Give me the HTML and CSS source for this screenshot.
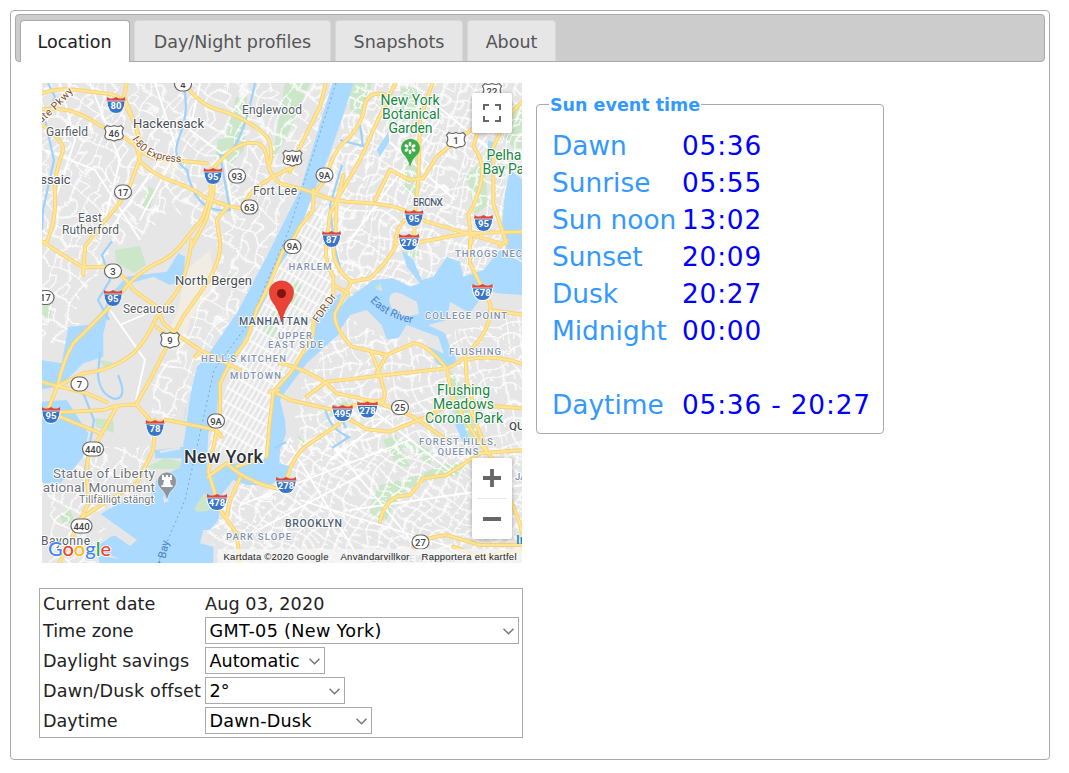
FILE: index.html
```html
<!DOCTYPE html>
<html lang="en">
<head>
<meta charset="utf-8">
<title>Location</title>
<link rel="stylesheet" href="styles.css">
</head>
<body>
<div class="tabs">
  <nav class="tab-bar">
    <a class="tab active"><span>Location</span></a>
    <a class="tab t2"><span>Day/Night profiles</span></a>
    <a class="tab t3"><span>Snapshots</span></a>
    <a class="tab t4"><span>About</span></a>
  </nav>
  <main class="panel">
    <section class="left">
      <svg class="map" viewBox="42 83 480 480" width="480" height="480">
        <defs>
          <filter id="bend" x="0" y="0" width="1" height="1"><feTurbulence baseFrequency=".022" numOctaves="2" seed="4"/><feDisplacementMap in="SourceGraphic" scale="20" xChannelSelector="R" yChannelSelector="G"/></filter>
          <pattern id="nj" width="19" height="25" patternUnits="userSpaceOnUse" patternTransform="rotate(30)"><path d="M0 1H19M1 0V25M0 14H10M10 14V25" class="st"/></pattern>
          <pattern id="mh" width="5" height="13" patternUnits="userSpaceOnUse" patternTransform="rotate(30)"><path d="M0 1H5M1 0V13" class="st"/></pattern>
          <pattern id="bx" width="13" height="17" patternUnits="userSpaceOnUse" patternTransform="rotate(18)"><path d="M0 1H13M1 0V17M7 0V9M0 9H7" class="st"/></pattern>
          <pattern id="qn" width="17" height="13" patternUnits="userSpaceOnUse" patternTransform="rotate(-14)"><path d="M0 1H17M1 0V13M9 0V7" class="st"/></pattern>
          <pattern id="bk" width="12" height="14" patternUnits="userSpaceOnUse" patternTransform="rotate(32)"><path d="M0 1H12M1 0V14M0 8H6" class="st"/></pattern>
          <g id="interstate">
            <path d="M-9.500 -6 Q-8.500 9 0 8.500 Q8.500 9 9.500 -6Z" fill="#3875c8" stroke="#fff" stroke-width="1"/>
            <path d="M-9 -8 Q-5 -5 0 -8 Q5 -5 9 -8 L9.500 -4H-9.500Z" fill="#d9483b"/>
            <path d="M-9.500 -4H9.500" stroke="#fff" stroke-width=".7"/>
          </g>
          <rect id="oval" x="-8.500" y="-7" width="17" height="14" rx="7" fill="#fff" stroke="#686868" stroke-width="1.200"/>
          <rect id="oval3" x="-10.500" y="-7" width="21" height="14" rx="7" fill="#fff" stroke="#686868" stroke-width="1.200"/>
          <path id="us" d="M-7 -7.500Q-4 -5.500 0 -7.500Q4 -5.500 7 -7.500L9.500 -5Q7 -1 9.300 3Q8.500 7 4 6.500L0 8L-4 6.500Q-8.500 7 -9.300 3Q-7 -1 -9.500 -5Z" fill="#fff" stroke="#686868" stroke-width="1.200"/>
          <g id="highways">
            <g transform="translate(40 80) scale(.33333)">
              <path d="M6 40C60 20 110 30 150 35S230 40 245 60S290 130 295 180S310 215 340 235L500 250"/>
              <path d="M262 0L252 50L285 130L300 180L298 240L265 330L230 380L180 440L135 500L130 580"/>
              <path d="M0 88C90 80 130 105 170 130S260 170 290 200L300 245Q350 290 400 305T500 355L565 378L600 385L640 330L690 295L760 260"/>
              <path d="M0 130Q70 180 70 210Q40 290 45 340Q50 420 20 486"/>
              <path d="M520 265C560 220 600 180 650 190S660 280 730 315"/>
              <path d="M523 260L520 340L498 420L455 500M512 265L512 340L488 415L435 480"/>
              <path d="M430 0Q460 60 520 85Q620 110 680 170Q700 200 690 250M565 378L530 420L540 486"/>
              <path d="M710 940L750 960L880 990M1020 970L1120 1010L1220 1080M900 1000L980 1048L1050 1055L1160 1010L1240 970L1450 985"/>
            </g>
            <g transform="translate(280 80) scale(.33333)">
              <path d="M0 310L60 325L160 360L200 365Q300 370 340 380T440 425L560 460L735 455M560 460L660 490M400 490L560 460"/>
              <path d="M100 330L100 390L60 440L35 486M140 0L120 80L60 200L30 275"/>
              <path d="M105 340L140 290Q160 210 200 180Q250 130 255 70Q270 30 320 45"/>
              <path d="M190 285Q180 350 150 400L140 486M165 486L170 360L240 240L280 150L350 0"/>
              <path d="M460 0L420 120L415 300L405 400L402 486M285 360L330 270L390 300L430 295L470 230L520 190L600 130L640 100"/>
              <path d="M600 130L580 200Q620 250 600 320T565 400L575 490M640 250L640 200L660 160L700 90L735 60M640 250L640 370L680 490M390 410Q350 430 345 490"/>
            </g>
            <g transform="translate(40 240) scale(.33333)">
              <path d="M0 0Q90 60 130 82L200 80Q240 90 280 150L350 200L370 250L420 290L480 330L600 390M130 82L130 105"/>
              <path d="M435 0Q400 50 350 70Q290 100 250 150L200 210L100 310Q70 360 55 430L20 520"/>
              <path d="M455 0Q440 120 400 170L350 230Q320 300 280 340Q220 390 130 400L50 440M540 0Q545 60 500 130L430 230L370 340L330 420L290 490"/>
              <path d="M0 425L60 440L140 460L200 486M730 30L690 130L650 210L620 300L570 370L540 430L540 540M350 262L375 280M690 455L715 450M465 350L480 335"/>
            </g>
            <g transform="translate(280 240) scale(.33333)">
              <path d="M140 0Q130 60 160 110L160 160M162 0Q150 80 215 125L270 115Q330 60 350 10L400 -5M160 135L205 160"/>
              <path d="M215 125L165 220Q160 260 215 320L320 345L400 310Q440 310 500 385L520 486M100 240L100 280Q70 340 30 400L-20 455L-30 540L-40 650"/>
              <path d="M275 340L295 390L315 460L310 486M320 345L290 400M80 470L140 425L500 385Q540 370 556 345Q640 270 630 190L600 130L570 70L570 0"/>
              <path d="M556 345L560 420L580 490M556 360Q650 340 735 375M0 370Q60 380 140 430L170 460L310 490M630 210L735 225M680 0L660 20"/>
            </g>
            <g transform="translate(40 400) scale(.33333)">
              <path d="M0 40L190 30Q240 10 290 15L340 70L380 60L530 90L545 110M345 60L340 150L290 250L160 330L100 370M230 20L180 110L150 150Q130 220 150 300L60 486"/>
              <path d="M60 50L180 100M530 95L505 215L540 330L590 400L600 490M505 230L560 190Q620 250 735 270M600 235L570 300L560 350M650 180L590 200"/>
            </g>
            <g transform="translate(280 400) scale(.33333)">
              <path d="M20 240Q40 160 90 130L180 70L200 20L310 0"/>
              <path d="M300 365Q310 310 350 290L390 285L430 235L500 225L600 160L735 150M520 0L600 130L640 180M560 0L620 150"/>
              <path d="M400 440Q440 410 500 405L600 435L735 435M520 440L600 470L735 450M690 300Q720 360 726 400"/>
            </g>
          </g>
        </defs>

        <rect x="42" y="83" width="480" height="480" fill="#e6e6e6"/>
        <g fill="#f1ede4"><circle cx="170" cy="165" r="9"/><path d="M186 270L210 250L215 290L190 320L183 350L160 350L178 310Z"/></g>
        <g fill="#cbe6c9" class="parks">
          <path d="M236 97L247 97L244 150L230 165L220 160ZM218 140L225 138L228 150L214 165ZM148 186L155 190L150 210L142 205ZM115 250L140 246L146 265L134 273L116 262Z"/>
          <path d="M285 83L310 83L285 140L272 160ZM400 88L417 86L418 118L404 120ZM405 150L418 148L416 200L405 190ZM466 175L485 160L488 205L475 215ZM350 83L372 83L362 115L350 110Z"/>
          <path d="M263 332L277 305L286 309L272 342ZM286 297L294 280L301 285L296 308ZM347 297L358 290L357 303L347 307ZM402 240L420 245L418 258L405 255ZM42 300L54 297L50 318L42 315Z"/>
          <path d="M380 485L420 475L440 465L470 462L460 475L420 482L400 495L385 522L370 515L372 498ZM383 440L396 435L410 467L396 465ZM400 440L422 442L418 450L400 447ZM420 445L434 452L430 467L418 455ZM333 405L350 400L345 420L330 415ZM298 435L305 442L300 447Z"/>
          <path d="M450 370L470 400L482 440L470 440L452 410ZM95 418L113 420L114 433L96 427ZM59 515L70 508L75 523L63 524ZM98 360L113 362L108 370ZM490 83L522 110V160L492 120Z"/>
        </g>
        <g filter="url(#bend)">
          <path d="M22 63H340L262 252L195 390L140 440L150 380L215 250L170 200L100 250L60 340H22Z" fill="url(#nj)"/>
          <path d="M42 440H140V583H42Z" fill="url(#nj)"/>
          <path d="M352 63H542V290L403 277L347 300L318 255L310 210Z" fill="url(#bx)"/>
          <path d="M325 310L427 343L542 290V455L300 445L290 410Z" fill="url(#qn)"/>
          <path d="M270 430L542 455V583H210L208 500Z" fill="url(#bk)"/>
        </g>
        <path d="M310 203L345 210L330 323L275 410L265 460L207 450L240 343Z" fill="url(#mh)"/>
        <g class="street">
          <path d="M60 83L75 140L55 200M90 83L120 160L100 240M155 83L177 150L140 220M200 83L190 130L224 155L232 205M45 150L95 170L140 240M160 160L110 230M235 105L275 150M110 310L145 360L136 400M120 325L155 310"/>
          <path d="M290 445L360 560M320 430L430 563M300 500L460 550M240 505L410 440M350 510L522 485M230 545L370 470M360 400L455 475M330 460L390 415M430 100L522 175M365 120L455 200M350 240L440 120"/>
        </g>

        <g transform="translate(40 80) scale(.33333)" fill="#aadaff">
          <path d="M880 0H943L925 60L870 220L820 340L790 420L745 520L690 600L680 650L640 730L600 800L550 880L535 940L530 1000L505 1060L500 1170L515 1182L570 1152L670 1142L690 1090L690 1020L700 940L770 850L820 790L828 720L880 650L905 640L885 700L900 760L850 805L800 850L740 930L720 960L735 1020L738 1060L720 1110L718 1150L755 1160L740 1190L690 1215L620 1215L580 1200L548 1240L535 1320L510 1350L490 1350L480 1390L520 1400L520 1460H180L170 1400L240 1350L170 1310L250 1260L330 1250L350 1200L420 1160L425 1135L345 1135L345 1110L430 1100L435 990L450 950L470 860L500 830L590 700L680 530L780 330Z"/>
          <path d="M885 700L920 660L1000 600L1060 595L1110 620L1140 610L1100 560L1085 510L1120 540L1145 600L1180 590L1220 530L1260 545L1270 590L1330 570L1380 510L1450 550V645L1370 640L1340 630L1290 700L1230 665L1220 720L1165 735L1215 760L1230 800L1250 840L1225 870L1190 850L1165 800L1210 820L1195 770L1100 735L1075 775L1040 778L1025 735L980 690L930 705L895 760Z"/>
          <path d="M1395 340L1410 270L1450 300V545L1400 510L1385 440ZM1345 180L1365 190L1355 260L1340 250ZM1235 1010L1265 1010L1290 1090L1270 1090ZM1010 210L1045 155L1048 185L1020 230Z"/>
          <path d="M0 840L65 850L85 740L145 735L190 690L215 640L260 590L380 575L415 520L435 530L430 600L390 615L340 590L270 610L210 680L190 760L190 830L130 850L90 890L50 920L0 930ZM0 965L80 960L145 1060L130 1130L90 1180L60 1210L0 1210Z"/>
        </g>
        <g class="creek">
          <path d="M183 83Q190 110 180 135T187 170Q195 215 230 210L220 155Q239 160 255 83M48 83L55 97L45 120L54 160L43 210L42 230M112 241L102 255L110 280L98 300L109 320"/>
          <path d="M100 352L98 375Q100 395 115 399Q128 398 118 375M80 385L86 400L94 420L85 470M275 448L286 442M325 408Q330 430 349 437L332 448M340 140L363 146L360 125M342 165L330 205L334 245L340 268"/>
        </g>
        <path d="M335 405L346 428" class="creek"/>
        <g fill="#e6e6e6">
          <path d="M389 301Q390 289 402 294L417 302L419 314L405 317L392 309ZM376 289L381 285L382 291ZM95 510L137 540L130 546L90 518ZM87 532L125 534L86 541ZM98 550L120 559L96 555ZM64 490L79 470L83 482L72 500ZM163 496L169 501L164 503Z"/>
        </g>
        <g class="pier"><path d="M181 400L173 430M189 395L183 440M196 370L188 380M160 452L180 448"/></g>
        <g fill="#cbe6c9"><path d="M147 467L165 458L182 462L179 469L153 469ZM194 509L204 493L214 500L208 511L197 512ZM375 287L381 283L380 290Z"/></g>
        <path class="ferry" d="M336 83L289 230L251 320L214 370L203 420L185 500L158 563"/>
        <use href="#highways" class="casing"/>
        <use href="#highways" class="road"/>

        <g class="shield">
          <g transform="translate(116 105)"><use href="#interstate"/><text y="4">80</text></g>
          <g transform="translate(213 176)"><use href="#interstate"/><text y="4">95</text></g>
          <g transform="translate(414 218)"><use href="#interstate"/><text y="4">95</text></g>
          <g transform="translate(483.500 223)"><use href="#interstate"/><text y="4">95</text></g>
          <g transform="translate(331.500 239)"><use href="#interstate"/><text y="4">87</text></g>
          <g transform="translate(409 242)"><use href="#interstate" transform="scale(1.1 1)"/><text y="4">278</text></g>
          <g transform="translate(113 298)"><use href="#interstate"/><text y="4">95</text></g>
          <g transform="translate(482.500 292)"><use href="#interstate" transform="scale(1.1 1)"/><text y="4">678</text></g>
          <g transform="translate(51 415)"><use href="#interstate"/><text y="4">95</text></g>
          <g transform="translate(155 428)"><use href="#interstate"/><text y="4">78</text></g>
          <g transform="translate(342.500 413)"><use href="#interstate" transform="scale(1.1 1)"/><text y="4">495</text></g>
          <g transform="translate(367.500 409.500)"><use href="#interstate" transform="scale(1.1 1)"/><text y="4">278</text></g>
          <g transform="translate(286 485)"><use href="#interstate" transform="scale(1.1 1)"/><text y="4">278</text></g>
          <g transform="translate(217 502)"><use href="#interstate" transform="scale(1.1 1)"/><text y="4">478</text></g>
        </g>
        <g class="route">
          <g transform="translate(183 84)"><use href="#oval"/><text y="3.500">4</text></g>
          <g transform="translate(237 176)"><use href="#oval"/><text y="3.500">93</text></g>
          <g transform="translate(123 192)"><use href="#oval"/><text y="3.500">17</text></g>
          <g transform="translate(249.500 207)"><use href="#oval"/><text y="3.500">63</text></g>
          <g transform="translate(324.500 175)"><use href="#oval"/><text y="3.500">9A</text></g>
          <g transform="translate(292.500 246.500)"><use href="#oval"/><text y="3.500">9A</text></g>
          <g transform="translate(113 271)"><use href="#oval"/><text y="3.500">3</text></g>
          <g transform="translate(45.500 297.500)"><use href="#oval"/><text y="3.500">17</text></g>
          <g transform="translate(79.500 384)"><use href="#oval"/><text y="3.500">7</text></g>
          <g transform="translate(216 421)"><use href="#oval"/><text y="3.500">9A</text></g>
          <g transform="translate(93 449)"><use href="#oval3"/><text y="3.500">440</text></g>
          <g transform="translate(81.500 526)"><use href="#oval3"/><text y="3.500">440</text></g>
          <g transform="translate(400 407.500)"><use href="#oval"/><text y="3.500">25</text></g>
          <g transform="translate(420.500 542)"><use href="#oval"/><text y="3.500">27</text></g>
          <g transform="translate(114 133)"><use href="#us"/><text y="3.500">46</text></g>
          <g transform="translate(456 140)"><use href="#us"/><text y="3.500">1</text></g>
          <g transform="translate(292.500 158)"><use href="#us"/><text y="3.500">9W</text></g>
          <g transform="translate(170 340)"><use href="#us"/><text y="3.500">9</text></g>
          <g transform="translate(492 91)"><use href="#us"/><text y="3.500">22</text></g>
        </g>

        <g class="label town">
          <text x="46" y="136" textLength="42">Garfield</text>
          <text x="242" y="114" textLength="60">Englewood</text>
          <text x="253" y="194.500" textLength="44">Fort Lee</text>
          <text x="78" y="221.500" textLength="24">East</text>
          <text x="62" y="233.500" textLength="57">Rutherford</text>
          <text x="123" y="313" textLength="52">Secaucus</text>
          <text x="41" y="545" textLength="49">Bayonne</text>
        </g>
        <g class="label city">
          <text x="133" y="128" textLength="71">Hackensack</text>
          <text x="25" y="184">Passaic</text>
          <text x="175" y="285" textLength="77">North Bergen</text>
          <text x="509" y="430" class="queens">QUEENS</text>
        </g>
        <text class="label nyc" x="184" y="463" textLength="79">New York</text>
        <g class="label borough">
          <text x="413" y="206" textLength="30">BRONX</text>
          <text x="239" y="325" textLength="69">MANHATTAN</text>
          <text x="285" y="527" textLength="57">BROOKLYN</text>
        </g>
        <g class="label hood">
          <text x="288.500" y="270" textLength="43">HARLEM</text>
          <text x="455" y="257" textLength="74">THROGS NECK</text>
          <text x="425" y="318.500" textLength="82">COLLEGE POINT</text>
          <text x="449" y="354.500" textLength="52">FLUSHING</text>
          <text x="278" y="338.500" textLength="34">UPPER</text>
          <text x="268" y="348" textLength="55">EAST SIDE</text>
          <text x="201" y="362" textLength="85">HELL'S KITCHEN</text>
          <text x="230" y="379" textLength="51">MIDTOWN</text>
          <text x="419" y="445" textLength="77">FOREST HILLS,</text>
          <text x="437.500" y="454.500" textLength="41">QUEENS</text>
          <text x="226" y="540" textLength="65">PARK SLOPE</text>
          <text x="515" y="480">JAMAICA</text>
          <text x="371" y="562" textLength="84">EAST NEW YORK</text>
        </g>
        <g class="label park">
          <text x="380.500" y="105" textLength="59">New York</text><text x="382" y="119" textLength="58">Botanical</text><text x="388.500" y="133" textLength="44">Garden</text>
          <text x="486.500" y="160" textLength="47">Pelham</text><text x="482.500" y="174" textLength="53">Bay Park</text>
          <text x="437" y="395" textLength="53">Flushing</text><text x="433" y="409" textLength="61">Meadows</text><text x="425" y="423" textLength="78">Corona Park</text>
        </g>
        <g class="label monument">
          <text x="53" y="478" textLength="102">Statue of Liberty</text><text x="33" y="492" textLength="122">National Monument</text><text class="small" x="79" y="503" textLength="75">Tillfälligt stängt</text>
        </g>
        <g class="label way">
          <path id="w1" d="M33 130Q56 112 80 84" fill="none"/><text><textPath href="#w1" textLength="56">State Pkwy</textPath></text>
          <path id="w2" d="M132 139Q146 163 184 162" fill="none"/><text><textPath href="#w2">I-80 Express</textPath></text>
          <text transform="translate(318 323) rotate(-55)">FDR Dr</text>
        </g>
        <g class="river">
          <path id="w3" d="M370 301Q386 318 411 323" fill="none"/><text><textPath href="#w3">East River</textPath></text>
          <text transform="translate(158 590) rotate(-77)">Upper Bay</text>
        </g>
        <text x="516" y="544" class="airport">Int</text>

        <path d="M410 167Q408 158 403 154A9.500 9.500 0 1 1 418 154Q412 159 410 167Z" fill="#41ad49"/>
        <g fill="#fff"><ellipse cx="410" cy="144" rx="1.400" ry="2.200"/><ellipse cx="410" cy="144" rx="1.400" ry="2.200" transform="rotate(60 410 148)"/><ellipse cx="410" cy="144" rx="1.400" ry="2.200" transform="rotate(120 410 148)"/><ellipse cx="410" cy="144" rx="1.400" ry="2.200" transform="rotate(180 410 148)"/><ellipse cx="410" cy="144" rx="1.400" ry="2.200" transform="rotate(240 410 148)"/><ellipse cx="410" cy="144" rx="1.400" ry="2.200" transform="rotate(300 410 148)"/></g>
        <path d="M167 500Q165 492 160 488A9.500 9.500 0 1 1 174 488Q169 492 167 500Z" fill="#8e959b" stroke="#fff" stroke-width=".5"/>
        <path d="M162 475H164V477H166V475H168V477H170V475H172V480H170L171 485H172.500V487H161.500V485H163L164 480H162Z" fill="#fff"/>
        <path d="M281.500 322Q279 310 272 301C265 288 274 281 281.500 281S298 288 291 301Q284 310 281.500 322Z" fill="#ea4335" stroke="#c7372b" stroke-width=".7"/>
        <circle cx="281.500" cy="293.500" r="4.500" fill="#811411"/>

        <g class="google">
          <text x="48" y="556" textLength="63"><tspan fill="#4285f4">G</tspan><tspan fill="#ea4335">o</tspan><tspan fill="#fbbc04">o</tspan><tspan fill="#4285f4">g</tspan><tspan fill="#34a853">l</tspan><tspan fill="#ea4335">e</tspan></text>
        </g>
        <rect x="218" y="549" width="304" height="14" fill="#f5f5f5" opacity=".75"/>
        <g class="credits">
          <text x="223.500" y="560" textLength="105">Kartdata ©2020 Google</text>
          <text x="340.500" y="560" textLength="69">Användarvillkor</text>
          <text x="421.500" y="560" textLength="95">Rapportera ett kartfel</text>
        </g>
        <g class="control"><rect x="472" y="93" width="40" height="40" rx="2"/><rect x="472" y="458" width="40" height="81" rx="2"/></g>
        <path d="M489 105H484V110M495 105H500V110M489 121H484V116M495 121H500V116" fill="none" stroke="#666" stroke-width="2"/>
        <path d="M483 478H501M492 469V487M483 519H501" stroke="#666" stroke-width="3.800"/>
        <path d="M477 498.500H507" stroke="#e6e6e6"/>
      </svg>

      <div class="settings">
        <span class="name n1">Current date</span><span class="date">Aug 03, 2020</span>
        <span class="name">Time zone</span>
        <div class="select zone"><span>GMT-05 (New York)</span><svg width="11" height="7"><path d="M.5 .7L5.500 5.700L10.500 .7"/></svg></div>
        <span class="name">Daylight savings</span>
        <div class="select auto"><span>Automatic</span><svg width="11" height="7"><path d="M.5 .7L5.500 5.700L10.500 .7"/></svg></div>
        <span class="name n4">Dawn/Dusk offset</span>
        <div class="select offset"><span>2°</span><svg width="11" height="7"><path d="M.5 .7L5.500 5.700L10.500 .7"/></svg></div>
        <span class="name">Daytime</span>
        <div class="select day"><span>Dawn-Dusk</span><svg width="11" height="7"><path d="M.5 .7L5.500 5.700L10.500 .7"/></svg></div>
      </div>
    </section>

    <fieldset class="sun">
      <legend>Sun event time</legend>
      <dl>
        <dt>Dawn</dt><dd>05:36</dd>
        <dt>Sunrise</dt><dd>05:55</dd>
        <dt>Sun noon</dt><dd>13:02</dd>
        <dt>Sunset</dt><dd>20:09</dd>
        <dt>Dusk</dt><dd>20:27</dd>
        <dt>Midnight</dt><dd>00:00</dd>
        <dt class="gap">Daytime</dt><dd class="gap">05:36 - 20:27</dd>
      </dl>
    </fieldset>
  </main>
</div>
</body>
</html>
```
FILE: styles.css
```css
* { box-sizing: border-box; }
body {
  margin: 0;
  padding: 10px;
  background: #fff;
  color: #222;
  font-family: "DejaVu Sans", Verdana, sans-serif;
}
.tabs {
  width: 1040px;
  height: 750px;
  padding: 3px 4px;
  border: 1px solid #aaa;
  border-radius: 4px;
}
.tab-bar {
  display: flex;
  align-items: flex-start;
  gap: 4px;
  height: 48px;
  padding: 5px 0 0 4px;
  background: #ccc;
  border: 1px solid #aaa;
  border-radius: 4px;
}
.tab {
  display: flex;
  justify-content: center;
  align-items: center;
  height: 41px;
  padding-top: 1px;
  border: 1px solid #d8d8d8;
  border-bottom: 0;
  border-radius: 4px 4px 0 0;
  background: #e6e6e6;
  color: #555;
  font-size: 17.5px;
  white-space: nowrap;
}
.tab.active {
  width: 110px;
  height: 42px;
  padding: 0 1px 0 0;
  background: #fff;
  border-color: #aaa;
  color: #212121;
}
.t2 { width: 197px; }
.t3 { width: 128px; }
.t4 { width: 89px; }
.panel {
  display: flex;
  align-items: flex-start;
  padding: 21px 0 0 24px;
}
.left { width: 484px; }
.map { display: block; margin-left: 3px; overflow: hidden; }
.settings {
  display: grid;
  grid-template-columns: 161px max-content;
  grid-template-rows: 25px 27px 27px 27px 27px;
  row-gap: 3px;
  align-items: center;
  width: 484px;
  height: 150px;
  margin-top: 25px;
  padding: 0 0 0 4px;
  border: 1px solid #aaa;
  font-size: 17.6px;
}
.name, .date { margin-left: -1px; white-space: nowrap; line-height: 27px; padding-top: 2px; }
.date, .n1 { padding-top: 5px; letter-spacing: .1px; }
.date { margin-left: 0; }
.n4 { letter-spacing: .16px; }
.select {
  display: flex;
  align-items: center;
  justify-content: space-between;
  height: 27px;
  margin-left: -.5px;
  padding: 1px 4px 0 4px;
  border: 1px solid #aaa;
  background: #fff;
  color: #000;
  white-space: nowrap;
}
.select svg { flex: none; fill: none; stroke: #777; stroke-width: 1.5; }
.zone { width: 314px; letter-spacing: .33px; }
.auto { width: 120px; }
.offset { width: 140px; }
.day { width: 167px; letter-spacing: .2px; }
.sun {
  width: 348px;
  height: 340px;
  min-width: 0;
  margin: 11px 0 0 13px;
  padding: 0 0 0 15px;
  border: 1px solid #aaa;
  border-radius: 4px;
}
.sun legend {
  margin-left: -3px;
  padding: 1px 1px 0;
  color: #39f;
  font-size: 17.5px;
  line-height: 20px;
  font-weight: bold;
}
.sun dl {
  display: grid;
  grid-template-columns: 130px max-content;
  grid-auto-rows: 37px;
  margin: 12px 0 0;
  font-size: 26.4px;
  line-height: 37px;
  white-space: nowrap;
}
.sun dt { color: #39f; }
.sun dd { margin: 0; color: #00f; letter-spacing: .8px; }
.sun .gap { grid-row: 8; }

.st { fill: none; stroke: #fff; stroke-width: 1.4; }
.street { fill: none; stroke: #fff; stroke-width: 1.8; }
.creek { fill: none; stroke: #9fd2fb; stroke-width: 2.2; }
.pier { fill: none; stroke: #e6e6e6; stroke-width: 2.5; }
.ferry { fill: none; stroke: #8aa5bd; stroke-width: 1; stroke-dasharray: 2 3; }
#highways path { vector-effect: non-scaling-stroke; }
.casing, .road { fill: none; stroke-linecap: round; stroke-linejoin: round; }
.casing { stroke: #f8d274; stroke-width: 4; }
.road { stroke: #ffe594; stroke-width: 2.2; }
.shield text { fill: #fff; font: bold 9.5px Roboto, sans-serif; text-anchor: middle; }
.route text { fill: #444; font: 500 9.5px Roboto, sans-serif; text-anchor: middle; }
.label text, text.label {
  font-family: Roboto, sans-serif;
  paint-order: stroke;
  stroke: #fff;
  stroke-width: 2px;
  stroke-linejoin: round;
}
.town text { fill: #555c63; font-size: 12px; }
.city text { fill: #474d54; font-size: 13px; }
.city text.queens { font-size: 11.5px; font-weight: 500; }
text.nyc { fill: #2c3136; font-size: 18px; font-weight: 500; }
.borough text { fill: #4e5d73; font-size: 10.5px; font-weight: 500; }
.hood text { fill: #7f91ac; font-size: 9.5px; font-weight: 500; stroke-width: 1.5px; }
.park text { fill: #178842; font-size: 14px; }
.monument text { fill: #6f757b; font-size: 13.5px; }
.monument text.small { font-size: 11px; }
.way text { fill: #7b4b24; font-size: 10.5px; }
.river text { fill: #4b80c6; font: 11px Roboto, sans-serif; }
.airport { fill: #1688bd; font: 500 13px Roboto, sans-serif; }
.google text {
  font: 500 20px Lato, sans-serif;
  paint-order: stroke;
  stroke: #fff;
  stroke-width: 1.5px;
}
.credits text { fill: #222; font: 9.5px "Liberation Sans", sans-serif; }
.control rect { fill: #fff; filter: drop-shadow(0 1px 2px rgba(0, 0, 0, .3)); }
```
